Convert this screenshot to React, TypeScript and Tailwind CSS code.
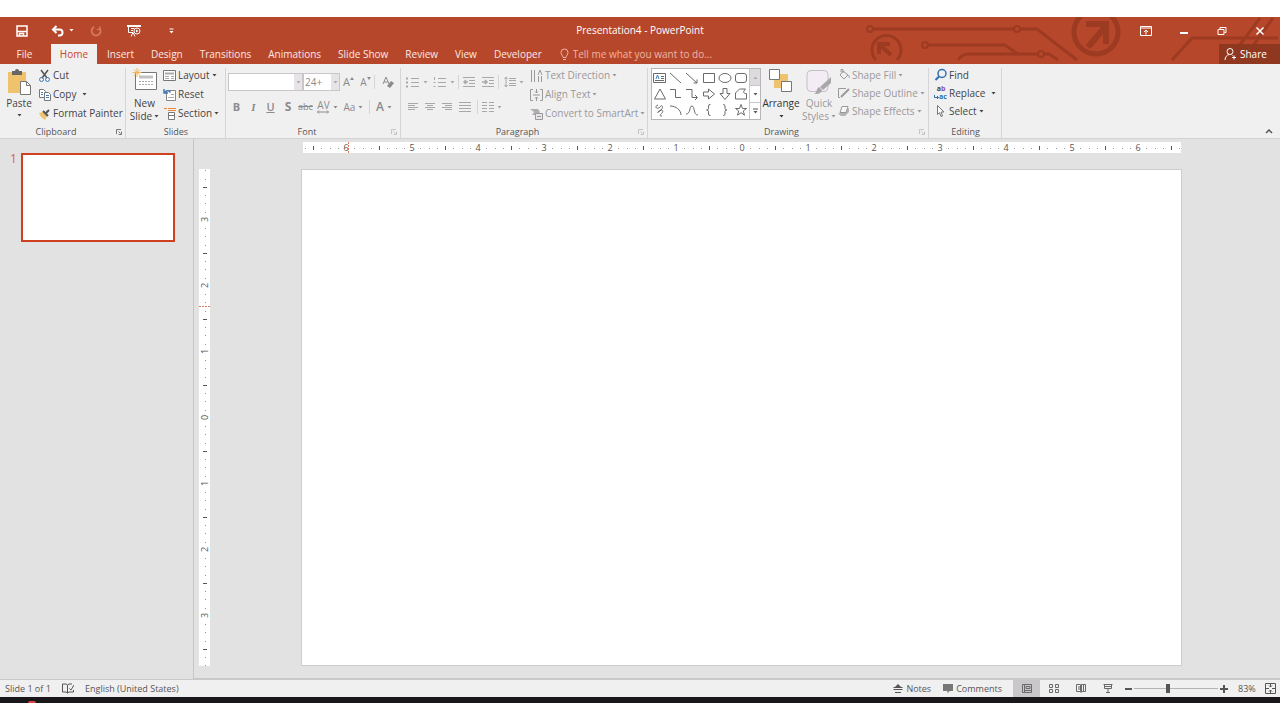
import React, { useState } from 'react';

interface IconProps {
  children: React.ReactNode;
  w?: number;
  h?: number;
  className?: string;
}

const Icon: React.FC<IconProps> = ({ children, w = 14, h = 14, className = '' }) => (
  <svg
    width={w}
    height={h}
    viewBox={`0 0 ${w} ${h}`}
    fill="none"
    stroke="currentColor"
    aria-hidden="true"
    className={`shrink-0 ${className}`}
  >
    {children}
  </svg>
);

const Caret = ({ className = '' }: { className?: string }) => (
  <Icon w={5} h={3} className={className}>
    <path d="M0.500 0h4L2.500 2.500z" fill="currentColor" stroke="none" />
  </Icon>
);

const Launcher = ({ muted = false, label }: { muted?: boolean; label: string }) => (
  <button
    type="button"
    aria-label={label}
    className={`absolute right-1 bottom-[3px] ${muted ? 'text-[#c4c2c4]' : 'text-[#777777]'}`}
  >
    <Icon w={6} h={6}>
      <path d="M0.500 5V0.500H5M2.500 2.500l2 2M5.500 2.500v3h-3" />
    </Icon>
  </button>
);

interface GroupProps {
  title: string;
  width: string;
  launcher?: 'normal' | 'muted';
  children: React.ReactNode;
}

const Group: React.FC<GroupProps> = ({ title, width, launcher, children }) => (
  <section
    aria-label={title}
    className={`relative flex shrink-0 flex-col ${width} after:absolute after:top-1 after:right-0 after:bottom-0 after:w-px after:bg-[#d6d4d6]`}
  >
    <div className="flex flex-1 pt-[2px]">{children}</div>
    <div className="h-[13px] text-center text-[9px] leading-[13px] text-[#555555]">{title}</div>
    {launcher && <Launcher muted={launcher === 'muted'} label={`${title} options`} />}
  </section>
);

interface SmallButtonProps {
  icon: React.ReactNode;
  label: string;
  caret?: boolean;
  caretGap?: boolean;
  muted?: boolean;
}

const SmallButton: React.FC<SmallButtonProps> = ({ icon, label, caret, caretGap, muted }) => (
  <button
    type="button"
    className={`flex items-center gap-px whitespace-nowrap ${
      muted ? 'text-[#9a989a]' : 'text-[#444444]'
    }`}
  >
    {icon}
    <span>{label}</span>
    {caret && <Caret className={caretGap ? 'ml-[5px]' : 'ml-px'} />}
  </button>
);

const ToolButton = ({
  label,
  children,
  caret,
  width = 'w-[17px]',
}: {
  label: string;
  children: React.ReactNode;
  caret?: boolean;
  width?: string;
}) => (
  <button
    type="button"
    aria-label={label}
    className={`flex h-4 shrink-0 items-center justify-center gap-[3px] ${width}`}
  >
    {children}
    {caret && <Caret />}
  </button>
);

const Divider = () => <span className="h-[14px] w-px shrink-0 bg-[#d6d4d6]" />;

const tabs = ['Insert', 'Design', 'Transitions', 'Animations', 'Slide Show', 'Review', 'View', 'Developer'];

const Circuit = () => (
  <svg
    width="430"
    height="44"
    viewBox="0 0 430 44"
    fill="none"
    stroke="#9c3b22"
    strokeWidth="3"
    aria-hidden="true"
    className="absolute top-0 right-0"
  >
    <circle cx="20" cy="12" r="3" strokeWidth="2" />
    <path d="M23 12h141M170 12h17L227 43" />
    <circle cx="167" cy="12" r="3" strokeWidth="2" />
    <path d="M26 43a14.500 14.500 0 1 1 21 0" />
    <path d="M41 38L30 28M29 37V27h11" strokeWidth="4" />
    <circle cx="75" cy="28" r="3" strokeWidth="2" />
    <path d="M78 28h77l13 9" />
    <path d="M108 43q4-6 11-6h69M194 37h5l9 6" />
    <circle cx="191" cy="37" r="3" strokeWidth="2" />
    <circle cx="246" cy="15" r="22" strokeWidth="5" />
    <path d="M238 30l17-20M236 7h20v20" strokeWidth="6" />
    <path d="M322 43l20-22h86M386 33l24-32M400 33l23-32" />
  </svg>
);

const TitleBar = () => (
  <div className="relative grid h-[27px] grid-cols-[1fr_auto_1fr] items-center text-white">
    <div className="flex items-center">
      <button type="button" aria-label="Save" className="ml-4">
        <Icon w={12} h={12}>
          <path d="M1 1h10v10H1z" strokeWidth="1.500" />
          <path d="M1 6.500h10M3.500 11V8.500h4V11" strokeWidth="1.500" />
        </Icon>
      </button>
      <button type="button" aria-label="Undo" className="ml-[23px] flex items-center gap-1">
        <Icon w={14} h={12}>
          <path d="M2 4.500h6.500a3 3 0 0 1 0 6H7" strokeWidth="2" />
          <path d="M5.500 1L2 4.500 5.500 8" strokeWidth="2" />
        </Icon>
        <Caret />
      </button>
      <button type="button" aria-label="Repeat" className="ml-4 text-[#d4745a]">
        <Icon w={12} h={12}>
          <path d="M4 2a4.500 4.500 0 1 0 5 .5" strokeWidth="2" />
          <path d="M6.500 4.500h3.500V1" />
        </Icon>
      </button>
      <button type="button" aria-label="Start from beginning" className="ml-[25px]">
        <Icon w={14} h={12}>
          <path d="M0 1h14" strokeWidth="2" />
          <path d="M1.500 1v6.500H6M6 7.500L4 11.500M6 7.500l2 4M4 3.500h3M4 5.500h2" />
          <circle cx="10" cy="6" r="3" />
          <path d="M9 4.500v3L11.500 6z" fill="currentColor" stroke="none" />
        </Icon>
      </button>
      <button type="button" aria-label="Customize Quick Access Toolbar" className="ml-7">
        <Icon w={5} h={6}>
          <path d="M0.500 1h4" />
          <path d="M0.500 3h4L2.500 5.500z" fill="currentColor" stroke="none" />
        </Icon>
      </button>
    </div>
    <h1 className="text-[10px]">Presentation4 - PowerPoint</h1>
    <div className="flex items-center justify-end gap-[26px] pr-[14px]">
      <button type="button" aria-label="Ribbon display options">
        <Icon w={12} h={10}>
          <path d="M0.500 0.500h11v9H0.500zM0 2h12M6 8.500V4M4 6l2-2 2 2" />
        </Icon>
      </button>
      <button type="button" aria-label="Minimize">
        <Icon w={12} h={10}>
          <path d="M2 7h8" strokeWidth="2" />
        </Icon>
      </button>
      <button type="button" aria-label="Restore">
        <Icon w={12} h={10}>
          <path d="M2 3.500h6v5H2zM4 3V1.500h6v5H8.500" />
        </Icon>
      </button>
      <button type="button" aria-label="Close">
        <Icon w={12} h={10}>
          <path d="M2.500 1.500l7 7M9.500 1.500l-7 7" strokeWidth="1.500" />
        </Icon>
      </button>
    </div>
  </div>
);

const TabRow = ({ query, onQuery }: { query: string; onQuery: (value: string) => void }) => (
  <nav className="relative flex h-5 items-stretch text-[10px] leading-5 text-[#fbe9e4]">
    <button type="button" className="mr-[10px] w-[41px] pl-2">
      File
    </button>
    <button type="button" className="mr-[2px] w-[46px] bg-[#f1f0f1] text-[#cf4526]">
      Home
    </button>
    <div className="flex gap-px">
      {tabs.map((tab) => (
        <button key={tab} type="button" className="px-2 whitespace-nowrap">
          {tab}
        </button>
      ))}
    </div>
    <label className="ml-[10px] flex items-center gap-1 text-[#eeb5a6]">
      <Icon w={9} h={13}>
        <path d="M3 9.500C3 7.500 1 7 1 4.500a3.500 3.500 0 0 1 7 0C8 7 6 7.500 6 9.500zM3 11.500h3" />
      </Icon>
      <input
        type="text"
        aria-label="Tell me what you want to do"
        value={query}
        onChange={(e) => onQuery(e.target.value)}
        placeholder="Tell me what you want to do..."
        className="w-[160px] bg-transparent outline-none placeholder:text-[#eeb5a6]"
      />
    </label>
    <button
      type="button"
      className="ml-auto flex w-[61px] items-center gap-1 bg-[#8f371f] pl-[5px] text-white"
    >
      <Icon w={12} h={14}>
        <circle cx="6" cy="4.500" r="3" />
        <path d="M1 13c0-3 2-5 4-5.500M8 10.500h4M10 8.500v4M7.500 7.500l1 1" />
      </Icon>
      Share
    </button>
  </nav>
);

const ClipboardGroup = () => (
  <Group title="Clipboard" width="w-[126px] pr-[14px]" launcher="normal">
    <button type="button" className="flex w-[38px] shrink-0 flex-col items-center pt-[3px] text-[#444444]">
      <Icon w={24} h={26}>
        <path d="M1 3h18v21H1z" fill="#efc26e" stroke="none" />
        <path d="M5 2h3a2 2 0 0 1 4 0h3v4H5z" fill="#666666" stroke="none" />
        <path d="M13.500 12.500h6l4 4v9h-10z" fill="#ffffff" stroke="#777777" />
        <path d="M19.500 12.500v4h4" stroke="#777777" />
      </Icon>
      <span className="leading-4">Paste</span>
      <Caret className="mt-[3px]" />
    </button>
    <div className="grid auto-rows-[19px] content-start justify-items-start">
      <SmallButton
        label="Cut"
        icon={
          <Icon>
            <path d="M3 1l6 8M10 1L4 9" stroke="#555555" strokeWidth="1.500" />
            <circle cx="3.500" cy="10.500" r="2" stroke="#3f7ab8" />
            <circle cx="9.500" cy="10.500" r="2" stroke="#3f7ab8" />
          </Icon>
        }
      />
      <SmallButton
        label="Copy"
        caret
        caretGap
        icon={
          <Icon>
            <path d="M1.500 1.500h4l2 2v6h-6z" fill="#ffffff" stroke="#777777" />
            <path d="M6.500 4.500h4l2 2v6h-6z" fill="#ffffff" stroke="#777777" />
            <path d="M3 4.500h2M3 6.500h2M8 7.500h3M8 9.500h3" stroke="#3f7ab8" />
          </Icon>
        }
      />
      <SmallButton
        label="Format Painter"
        icon={
          <Icon>
            <path d="M1 6l4-1 4 4-2 4C4 11 2 9 1 6z" fill="#efc26e" stroke="none" />
            <path d="M5 4l5 5M7 7l4-4" stroke="#555555" strokeWidth="2" />
          </Icon>
        }
      />
    </div>
  </Group>
);

const SlidesGroup = () => (
  <Group title="Slides" width="w-[100px]">
    <button type="button" className="flex w-[37px] shrink-0 flex-col items-center pt-[2px] text-[#444444]">
      <Icon w={26} h={24}>
        <path d="M3.500 4.500h21v17h-21z" fill="#ffffff" stroke="#777777" />
        <path d="M7 7.500h14v3H7z" fill="#c2c2c2" stroke="none" />
        <path d="M7 13.500h14M7 16.500h14" stroke="#aaaaaa" strokeDasharray="2 1" />
        <path d="M5 0v9M0.500 4.500h9M2 1.500l6 6M8 1.500l-6 6" stroke="#efb65a" />
      </Icon>
      <span className="mt-1 leading-[14px]">New</span>
      <span className="flex items-center gap-[2px] leading-[13px]">
        Slide <Caret />
      </span>
    </button>
    <div className="grid auto-rows-[19px] content-start justify-items-start">
      <SmallButton
        label="Layout"
        caret
        icon={
          <Icon>
            <path d="M0.500 1.500h12v10H0.500z" fill="#ffffff" stroke="#777777" />
            <path d="M2 4.500h9" stroke="#aaaaaa" strokeWidth="2" />
            <path d="M2 7.500h4M2 9.500h4M8 7.500h3M8 9.500h3" stroke="#aaaaaa" />
          </Icon>
        }
      />
      <SmallButton
        label="Reset"
        icon={
          <Icon>
            <path d="M3.500 2.500h9v10h-9z" fill="#ffffff" stroke="#888888" />
            <path d="M5 9.500h6M8 6.500h3" stroke="#aaaaaa" />
            <path d="M1 1v4h4M1.500 5C3 2 6 2 7.500 4.500" stroke="#3f7ab8" strokeWidth="1.500" />
          </Icon>
        }
      />
      <SmallButton
        label="Section"
        caret
        icon={
          <Icon>
            <path d="M1 1.500h3M5 1.500h8M5 3.500h8" stroke="#e8863a" />
            <path d="M5.500 5.500h6v7h-6z" fill="#ffffff" stroke="#777777" />
            <path d="M5 8.500h7" stroke="#777777" />
          </Icon>
        }
      />
    </div>
  </Group>
);

const FontGroup = () => (
  <Group title="Font" width="w-[175px] pr-[13px]" launcher="muted">
    <div className="flex w-[172px] shrink-0 flex-col gap-2 pt-[7px] pl-[2px] text-[#8c8a8c]">
      <div className="flex h-[18px] items-center">
        <div className="relative flex items-center">
          <select
            aria-label="Font"
            className="h-[18px] w-[75px] appearance-none border border-[#c9c5c9] bg-white"
          >
            <option> </option>
          </select>
          <span className="pointer-events-none absolute top-px right-px bottom-px flex w-2 items-center justify-center bg-[#e6e4e6] text-[#aaaaaa]">
            <Caret />
          </span>
        </div>
        <div className="relative flex items-center">
          <select
            aria-label="Font size"
            className="h-[18px] w-[37px] appearance-none border border-[#c9c5c9] bg-white pl-px text-[10px]"
          >
            <option>24+</option>
          </select>
          <span className="pointer-events-none absolute top-px right-px bottom-px flex w-2 items-center justify-center bg-[#e6e4e6] text-[#aaaaaa]">
            <Caret />
          </span>
        </div>
        <span className="w-[3px]" />
        <ToolButton label="Increase font size">
          <span className="text-[11px]">A</span>
          <Icon w={4} h={3} className="-ml-[3px] mb-2">
            <path d="M0 3l2-3 2 3z" fill="currentColor" stroke="none" />
          </Icon>
        </ToolButton>
        <ToolButton label="Decrease font size">
          <span className="text-[10px]">A</span>
          <Icon w={4} h={3} className="-ml-[3px] mb-2">
            <path d="M0 0h4L2 3z" fill="currentColor" stroke="none" />
          </Icon>
        </ToolButton>
        <span className="w-[3px]" />
        <Divider />
        <ToolButton label="Clear formatting" width="w-[25px]">
          <Icon>
            <path d="M2 9l3-7 3 7M3 7h4" />
            <path d="M6 11l4-5 3 2-4 5z" fill="currentColor" stroke="none" />
          </Icon>
        </ToolButton>
      </div>
      <div className="flex items-center text-[11px]">
        <ToolButton label="Bold">
          <b>B</b>
        </ToolButton>
        <ToolButton label="Italic">
          <i className="font-['Liberation_Serif',serif] font-bold">I</i>
        </ToolButton>
        <ToolButton label="Underline">
          <span className="font-semibold underline">U</span>
        </ToolButton>
        <ToolButton label="Text shadow" width="w-[18px]">
          <b className="text-[12px]">S</b>
        </ToolButton>
        <ToolButton label="Strikethrough">
          <span className="text-[9px] line-through">abc</span>
        </ToolButton>
        <ToolButton label="Character spacing" caret width="w-[27px]">
          <span className="flex flex-col items-center">
            <span className="text-[10px] leading-[10px]">AV</span>
            <Icon w={12} h={4}>
              <path d="M0.500 2h11M2 0.500L0.500 2 2 3.500M10 0.500L11.500 2 10 3.500" />
            </Icon>
          </span>
        </ToolButton>
        <ToolButton label="Change case" caret width="w-[25px]">
          <span className="text-[10px]">Aa</span>
        </ToolButton>
        <span className="w-[3px]" />
        <Divider />
        <ToolButton label="Font color" caret width="w-[28px]">
          <span className="text-[12px] font-semibold">A</span>
        </ToolButton>
      </div>
    </div>
  </Group>
);

const listLines = 'M5 2.5h8M5 6.5h8M5 10.5h8';

const ParagraphGroup = () => (
  <Group title="Paragraph" width="w-[247px] pr-[14px]" launcher="muted">
    <div className="flex w-[129px] shrink-0 flex-col gap-2 pt-2 pl-[3px] text-[#a9a7a9]">
      <div className="flex h-4 items-center">
        <ToolButton label="Bullets" caret width="w-[26px]">
          <Icon h={13}>
            <path d={listLines} />
            <path d="M0 2.500h2M0 6.500h2M0 10.500h2" strokeWidth="2" />
          </Icon>
        </ToolButton>
        <ToolButton label="Numbering" caret width="w-[27px]">
          <Icon h={13}>
            <path d={listLines} />
            <path d="M1.500 1v3M0.500 6.500h2M0.500 10.500h2" />
          </Icon>
        </ToolButton>
        <span className="w-px" />
        <Divider />
        <ToolButton label="Decrease indent" width="w-5">
          <Icon w={12} h={12}>
            <path d="M0 1.500h12M6 4.500h6M6 7.500h6M0 10.500h12" />
            <path d="M5 6H1M3 4L1 6l2 2" strokeWidth="1.500" />
          </Icon>
        </ToolButton>
        <ToolButton label="Increase indent">
          <Icon w={12} h={12}>
            <path d="M0 1.500h12M7 4.500h5M7 7.500h5M0 10.500h12" />
            <path d="M0 6h4M3 4l2 2-2 2" strokeWidth="1.500" />
          </Icon>
        </ToolButton>
        <span className="w-[2px]" />
        <Divider />
        <ToolButton label="Line spacing" caret width="w-[30px]">
          <Icon w={12} h={12}>
            <path d="M5 2.500h7M5 4.500h7M5 7.500h7M5 9.500h7M2 1v10M0.500 3L2 1l1.500 2M0.500 9L2 11l1.500-2" />
          </Icon>
        </ToolButton>
      </div>
      <div className="flex items-center pt-px">
        <ToolButton label="Align left">
          <Icon w={10} h={10}>
            <path d="M0 1.500h10M0 3.500h7M0 5.500h10M0 7.500h7" />
          </Icon>
        </ToolButton>
        <ToolButton label="Center">
          <Icon w={10} h={10}>
            <path d="M0 1.500h10M2 3.500h6M0 5.500h10M2 7.500h6" />
          </Icon>
        </ToolButton>
        <ToolButton label="Align right" width="w-[18px]">
          <Icon w={10} h={10}>
            <path d="M0 1.500h10M3 3.500h7M0 5.500h10M3 7.500h7" />
          </Icon>
        </ToolButton>
        <ToolButton label="Justify">
          <Icon w={12} h={10}>
            <path d="M0 0.500h12M0 3.500h12M0 6.500h12M0 9.500h12" />
          </Icon>
        </ToolButton>
        <span className="w-1" />
        <Divider />
        <ToolButton label="Columns" caret width="w-[28px]">
          <Icon w={12} h={10}>
            <path d="M0 0.500h5M0 3.500h5M0 6.500h5M0 9.500h5M7 0.500h5M7 3.500h5M7 6.500h5M7 9.500h5" />
          </Icon>
        </ToolButton>
      </div>
    </div>
    <div className="grid auto-rows-[19px] content-start justify-items-start">
      <SmallButton
        label="Text Direction"
        caret
        muted
        icon={
          <Icon>
            <path d="M1.500 1v12M4.500 1v12M8.500 13V7M11.500 13V7M8 6l2-5 2 5" />
          </Icon>
        }
      />
      <SmallButton
        label="Align Text"
        caret
        muted
        icon={
          <Icon>
            <path d="M3 1.500H0.500v11H3M10 1.500h2.500v11H10M3 7h7M6.500 1v4M6.500 9v4M5 3.500L6.500 5 8 3.500M5 10.500L6.500 9 8 10.500" />
          </Icon>
        }
      />
      <SmallButton
        label="Convert to SmartArt"
        caret
        muted
        icon={
          <Icon>
            <path d="M0 2h8l2 3-2 3H2l2-3z" fill="#b0aeb0" stroke="none" />
            <path d="M5.500 6.500h7v6h-7z" fill="#e6e4e6" />
            <path d="M7 9.500h4" />
          </Icon>
        }
      />
    </div>
  </Group>
);

const shapes: { name: string; d: string }[] = [
  { name: 'Text box', d: 'M0.5 2.5h12v9H0.5zM8 5.5h3M8 7.5h3M2 9.5h9' },
  { name: 'Line', d: 'M1 2l11 10' },
  { name: 'Arrow line', d: 'M1 2l11 10M12 8.5V12H8.5' },
  { name: 'Rectangle', d: 'M1.5 2.5h11v9h-11z' },
  { name: 'Oval', d: 'M1 7a6 4.5 0 1 0 12 0a6 4.5 0 1 0-12 0' },
  { name: 'Rounded rectangle', d: 'M4 2.5h6a2.5 2.5 0 0 1 2.5 2.5v4a2.5 2.5 0 0 1-2.5 2.5H4a2.5 2.5 0 0 1-2.5-2.5V5a2.5 2.5 0 0 1 2.5-2.5z' },
  { name: 'Triangle', d: 'M7 2L1.5 12h11z' },
  { name: 'Elbow connector', d: 'M1 2.5h5.5v8H12' },
  { name: 'Elbow arrow connector', d: 'M1 2.5h6v8h5M10 8l2.5 2.5L10 13' },
  { name: 'Right arrow', d: 'M1.5 5h5V2l6 5-6 5V9h-5z' },
  { name: 'Down arrow', d: 'M5 1.5v5H2l5 6 5-6H9v-5z' },
  { name: 'Freeform', d: 'M1.5 12V6l4-4h6c-3 3-2 5 1 4.500V12z' },
  { name: 'Scribble', d: 'M5 2c-5 2 0 5 2 2s4 0 1 3-5 3-2 1 5 0 3 2-3 3 0 3' },
  { name: 'Arc', d: 'M1 3c6 0 11 4 11 9' },
  { name: 'Curve', d: 'M1 11c5 0 3-8 6-8s1 9 6 9' },
  { name: 'Left brace', d: 'M8.5 1.5H8Q6.5 1.5 6.5 3v2.500Q6.500 7 4.500 7Q6.500 7 6.500 8.500V11Q6.500 12.500 8 12.500h.5' },
  { name: 'Right brace', d: 'M5 1.5h.5Q7 1.5 7 3v2.500Q7 7 9 7Q7 7 7 8.500V11Q7 12.500 5.500 12.500H5' },
  { name: 'Star', d: 'M7 1.5l1.500 4h4L9.300 8l1.200 4.200L7 9.700l-3.500 2.500L4.700 8 1.500 5.500h4z' },
];

const DrawingGroup = () => (
  <Group title="Drawing" width="w-[281px] pr-[14px]" launcher="muted">
    <div className="mt-[2px] ml-[3px] flex h-[52px] w-[110px] shrink-0 border border-[#b8b5b8] bg-white">
      <div className="grid flex-1 grid-cols-6 content-evenly justify-items-center text-[#6b6b6b]">
        {shapes.map((shape, index) => (
          <button key={shape.name} type="button" aria-label={shape.name}>
            <Icon>
              <path d={shape.d} />
              {index === 0 && <path d="M3 8l1.500-4L6 8" stroke="#3f7ab8" />}
            </Icon>
          </button>
        ))}
      </div>
      <div className="flex w-[11px] flex-col divide-y divide-[#c9c5c9] border-l border-[#c9c5c9] text-[#555555]">
        <button type="button" aria-label="Scroll up" className="flex flex-1 items-center justify-center bg-[#dddbdd] text-[#aaaaaa]">
          <Caret className="rotate-180" />
        </button>
        <button type="button" aria-label="Scroll down" className="flex flex-1 items-center justify-center">
          <Caret />
        </button>
        <button type="button" aria-label="More shapes" className="flex flex-1 items-center justify-center">
          <Icon w={5} h={6}>
            <path d="M0 1h5" />
            <path d="M0.500 3h4L2.500 5.500z" fill="currentColor" stroke="none" />
          </Icon>
        </button>
      </div>
    </div>
    <button type="button" className="flex w-[40px] shrink-0 flex-col items-center pt-[3px] text-[#333333]">
      <Icon w={24} h={24}>
        <path d="M11 5h8v8h-8zM5 11h8v8H5z" fill="#efc26e" stroke="none" />
        <path d="M0.500 0.500h10v10H0.500zM12.500 12.500h10v10h-10z" fill="#ffffff" stroke="#777777" />
      </Icon>
      <span className="mt-[3px] leading-[14px]">Arrange</span>
      <Caret className="mt-[5px]" />
    </button>
    <button type="button" className="flex w-[36px] shrink-0 flex-col items-center pt-[3px] text-[#9a989a]">
      <Icon w={26} h={26}>
        <path d="M5 1.500h13a4 4 0 0 1 4 4v13a4 4 0 0 1-4 4H5a4 4 0 0 1-4-4v-13a4 4 0 0 1 4-4z" fill="#f3ecf5" stroke="#c3bfc4" />
        <path d="M25 8v6l-8 7-3-3zM13 18l3 3c-1 4-4 4-8 4 3-1 2-5 5-7z" fill="#a9a7a9" stroke="none" />
      </Icon>
      <span className="mt-px leading-[14px]">Quick</span>
      <span className="flex items-center gap-[2px] leading-[13px]">
        Styles <Caret />
      </span>
    </button>
    <div className="grid auto-rows-[18px] content-start justify-items-start">
      <SmallButton
        label="Shape Fill"
        caret
        muted
        icon={
          <Icon>
            <path d="M6 3l5 4-4 4-4-4zM6 5V1.500H4V4M11.500 7c1 1.500 1 2 .5 3" />
          </Icon>
        }
      />
      <SmallButton
        label="Shape Outline"
        caret
        muted
        icon={
          <Icon>
            <path d="M9 2.500H1.500v9H3" />
            <path d="M4 11l8-8" strokeWidth="2" />
          </Icon>
        }
      />
      <SmallButton
        label="Shape Effects"
        caret
        muted
        icon={
          <Icon>
            <path d="M3 9l9-5v4l-4 4H4L1 9z" fill="#b4b2b4" stroke="none" />
            <path d="M5 2.500h6L9 8.500H3z" fill="#f6f4f6" />
          </Icon>
        }
      />
    </div>
  </Group>
);

const EditingGroup = () => (
  <Group title="Editing" width="w-[73px]">
    <div className="grid auto-rows-[18px] content-start justify-items-start pl-[5px]">
      <SmallButton
        label="Find"
        icon={
          <Icon>
            <circle cx="8" cy="5.500" r="4" stroke="#2f6eb0" strokeWidth="1.500" />
            <path d="M5 8.500L1.500 12" stroke="#2f6eb0" strokeWidth="2" />
          </Icon>
        }
      />
      <SmallButton
        label="Replace"
        caret
        caretGap
        icon={
          <span aria-hidden="true" className="flex w-[14px] flex-col text-[7px] leading-[8px] font-bold">
            <span>
              a<span className="text-[#8a4fb0]">b</span>
            </span>
            <span className="flex items-center text-[#2f6eb0]">
              <Icon w={5} h={5}>
                <path d="M0.500 0v2.500H4M3 1l1.500 1.500L3 4" />
              </Icon>
              ac
            </span>
          </span>
        }
      />
      <SmallButton
        label="Select"
        caret
        icon={
          <Icon>
            <path d="M3.500 1.500v9l2-2 1.500 4 1.500-.5L7 8h3z" fill="#ffffff" stroke="#777777" />
          </Icon>
        }
      />
    </div>
  </Group>
);

const Ribbon = () => (
  <div className="relative flex h-[75px] border-b border-[#d4d1d4] bg-[#f1f0f1] text-[10px]">
    <ClipboardGroup />
    <SlidesGroup />
    <FontGroup />
    <ParagraphGroup />
    <DrawingGroup />
    <EditingGroup />
    <button type="button" aria-label="Collapse the ribbon" className="mt-auto mr-[7px] mb-1 ml-auto text-[#555555]">
      <Icon w={8} h={6}>
        <path d="M1 5l3-3 3 3" strokeWidth="1.500" />
      </Icon>
    </button>
  </div>
);

const UNIT = 66;

// Tick marks run outwards from the zero in the middle, eight to an inch.
const Ruler = ({ length, vertical = false, marker }: { length: number; vertical?: boolean; marker: number }) => {
  const half = length / 2;
  const count = Math.floor(half / (UNIT / 8));
  const steps = Array.from({ length: count * 2 + 1 }, (_, i) => i - count);

  return (
    <svg
      viewBox={vertical ? `-6 ${-half} 11 ${length}` : `${-half} -6 ${length} 11`}
      aria-hidden="true"
      shapeRendering="crispEdges"
      className={vertical ? 'h-full w-[11px] overflow-visible bg-white' : 'h-[11px] w-full overflow-visible bg-white'}
    >
      <g transform={vertical ? 'rotate(-90)' : undefined} fill="#555555">
        {steps.map((step) => {
          const at = (step * UNIT) / 8;
          if (step % 8 === 0) {
            return (
              <text key={step} x={at} y="3" textAnchor="middle" fontSize="9">
                {Math.abs(step / 8)}
              </text>
            );
          }
          const tall = step % 4 === 0;
          return (
            <rect
              key={step}
              x={Math.round(at) - (vertical ? 1 : 0)}
              y={tall ? -2 : 0}
              width="1"
              height={tall ? 4 : 1}
              fill={tall ? '#555555' : '#999999'}
            />
          );
        })}
      </g>
      <path
        d={vertical ? `M-6 ${marker + 0.5}h11` : `M${marker + 0.5} -6v11`}
        stroke="#e0785c"
        strokeDasharray="2 1"
      />
    </svg>
  );
};

const Workspace = () => (
  <main className="flex flex-1 bg-[#e3e2e3]">
    <aside className="flex w-[194px] shrink-0 items-start gap-1 border-r border-[#c6c4c6] pt-[14px] pl-[10px] text-[#dd5f42]">
      <span className="w-[7px] text-[12px] leading-3">1</span>
      <button type="button" aria-label="Slide 1" className="h-[89px] w-[154px] border-2 border-[#cf3f20] bg-white" />
    </aside>
    <div className="flex flex-1 flex-col border-b border-[#c9c6c9] pr-[98px] pb-[12px] pl-[5px]">
      <div className="pt-[3px] pr-px pl-[104px]">
        <Ruler length={878} marker={-394} />
      </div>
      <div className="flex flex-1 gap-[91px] pt-4">
        <div className="flex w-[11px] shrink-0">
          <Ruler length={496} marker={-112} vertical />
        </div>
        <section aria-label="Slide" className="flex-1 border border-[#cfcccf] bg-white" />
      </div>
    </div>
  </main>
);

const StatusBar = () => {
  const [zoom, setZoom] = useState(83);

  return (
    <footer className="flex h-[18px] items-center border-t border-[#cbc8cb] bg-[#f1f0f1] text-[9px] text-[#555555]">
      <span className="w-[57px] pl-[5px]">Slide 1 of 1</span>
      <button type="button" aria-label="Spelling" className="ml-[5px]">
        <Icon w={12} h={11}>
          <path d="M5.500 2L4 1H0.500v8H4l1.500 1L7 9h4.500V7M5.500 2v8M5.500 2L7 1h3M7.500 5.500l1.500 1.500 3-5" />
        </Icon>
      </button>
      <button type="button" className="ml-[11px]">
        English (United States)
      </button>
      <button type="button" className="ml-auto flex items-center gap-[3px]">
        <Icon w={10} h={9}>
          <path d="M5 0l3 3H2z" fill="currentColor" stroke="none" />
          <path d="M0.500 3.500h9M0.500 5.500h9M2 8.500h6" />
        </Icon>
        Notes
      </button>
      <button type="button" className="ml-3 flex items-center gap-[3px]">
        <Icon w={10} h={10}>
          <path d="M0 0h10v7H6.500L4.500 9.500V7H0z" fill="#777777" stroke="none" />
        </Icon>
        Comments
      </button>
      <div className="ml-[11px] flex text-[#6a6a6a]">
        <button type="button" aria-label="Normal view" className="flex h-[17px] w-[27px] items-center justify-center bg-[#c9c7c9]">
          <Icon w={10} h={9}>
            <path d="M0.500 0.500h9v8h-9zM2.500 0.500v8M4 2.500h4v2H4zM3 6.500h6" />
          </Icon>
        </button>
        <button type="button" aria-label="Slide sorter" className="flex h-[17px] w-[27px] items-center justify-center">
          <Icon w={10} h={9}>
            <path d="M0.500 0.500h3v3h-3zM6.500 0.500h3v3h-3zM0.500 5.500h3v3h-3zM6.500 5.500h3v3h-3z" />
          </Icon>
        </button>
        <button type="button" aria-label="Reading view" className="flex h-[17px] w-[27px] items-center justify-center">
          <Icon w={10} h={9}>
            <path d="M0.500 0.500h4v7h-4zM5.500 0.500h4v7h-4zM5 1v8M7.500 1v6M2 3h2M2 5h2" />
          </Icon>
        </button>
        <button type="button" aria-label="Slide show" className="flex h-[17px] w-[27px] items-center justify-center">
          <Icon w={10} h={9}>
            <path d="M0.500 0.500h9M1.500 0.500v4h7v-4M5 4.500v4M3 8.500h4M2 2.500h6" />
          </Icon>
        </button>
      </div>
      <button type="button" aria-label="Zoom out" className="ml-1" onClick={() => setZoom(Math.max(10, zoom - 10))}>
        <Icon w={7} h={8}>
          <path d="M0 4h7" strokeWidth="2" />
        </Icon>
      </button>
      <input
        type="range"
        aria-label="Zoom"
        min={10}
        max={190}
        value={zoom}
        onChange={(e) => setZoom(Number(e.target.value))}
        className="mx-[2px] h-px w-[84px] appearance-none bg-[#b5b3b5] [&::-webkit-slider-thumb]:h-[9px] [&::-webkit-slider-thumb]:w-1 [&::-webkit-slider-thumb]:appearance-none [&::-webkit-slider-thumb]:bg-[#555555]"
      />
      <button type="button" aria-label="Zoom in" onClick={() => setZoom(Math.min(190, zoom + 10))}>
        <Icon w={8} h={8}>
          <path d="M0 4h8M4 0v8" strokeWidth="2" />
        </Icon>
      </button>
      <span className="ml-[10px] w-[17px] whitespace-nowrap">{zoom}%</span>
      <button type="button" aria-label="Fit slide to window" className="mr-1 ml-[10px]">
        <Icon w={11} h={11}>
          <path d="M0.500 0.500h10v10H0.500zM5.500 0v4M5.500 7v4M0 5.500h4M7 5.500h4M4 2.500L5.500 4 7 2.500M4 8.500L5.500 7 7 8.500" />
        </Icon>
      </button>
    </footer>
  );
};

const App = () => {
  const [query, setQuery] = useState('');

  return (
    <div className="flex min-h-screen flex-col bg-white py-[17px] font-['Open_Sans',sans-serif]">
      <header>
        <div className="relative bg-[#b7472a]">
          <Circuit />
          <TitleBar />
          <TabRow query={query} onQuery={setQuery} />
        </div>
        <Ribbon />
      </header>
      <Workspace />
      <StatusBar />
      <div className="flex h-[6px] items-end bg-[#1a171b] pl-[28px]">
        <span className="h-[2px] w-2 rounded-t-full bg-[#d8453f]" />
      </div>
    </div>
  );
};

export default App;
